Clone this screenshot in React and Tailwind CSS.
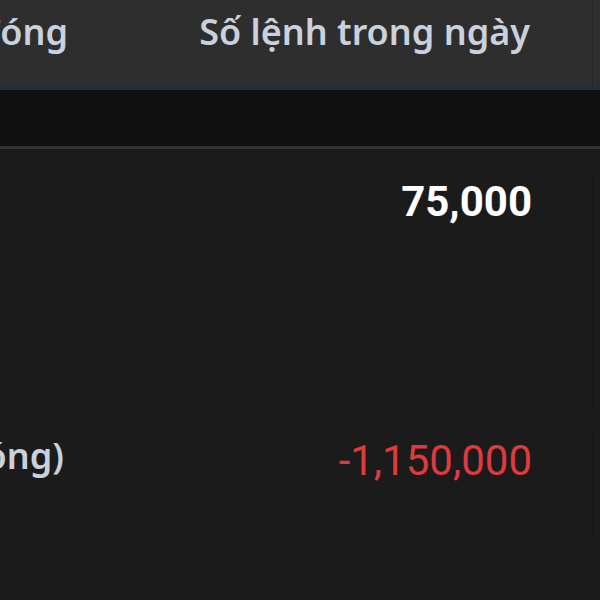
import React from 'react';

const rows = [
  { label: '', value: '75,000', tone: 'text-white font-bold', pad: 'h-[130px] pt-[21px]' },
  { label: '', value: '', tone: '', pad: 'h-[130px]' },
  { label: 'Lãi/lỗ (đã đóng)', value: '-1,150,000', tone: 'text-[#df3a3f]', pad: 'h-[130px] pt-[20px]' },
];

const App = () => {
  return (
    <div className="w-[600px] h-[600px] overflow-hidden bg-[#1b1b1b] font-['Roboto',sans-serif]">
      {/* header */}
      <div className="flex h-[86px] bg-[#2e2e2e] text-[#c9d1dc] text-[36px] font-semibold font-['Noto_Sans',sans-serif]">
        <div className="w-[68px] flex justify-end overflow-hidden whitespace-nowrap pt-[5px]">
          <span>Lệnh đóng</span>
        </div>
        <div className="w-[524px] flex justify-end pr-[62px] pt-[5px] whitespace-nowrap">
          Số lệnh trong ngày
        </div>
        <div className="flex-1 border-l border-[#262626]"></div>
      </div>
      <div className="h-[4px] bg-[#262c3b]"></div>
      <div className="h-[56px] bg-[#101010]"></div>
      <div className="h-[3px] bg-[#323232]"></div>

      {rows.map((r, i) => (
        <div key={i} className={`flex ${r.pad} text-[42px]`}>
          <div className="w-[64px] flex justify-end overflow-hidden whitespace-nowrap text-[#c9d1dc] text-[36px] font-semibold font-['Noto_Sans',sans-serif]">
            <span>{r.label}</span>
          </div>
          <div className={`w-[528px] flex justify-end pr-[60px] whitespace-nowrap ${r.tone}`}>
            {r.value}
          </div>
          <div className="flex-1 border-l border-[#171717]"></div>
        </div>
      ))}
    </div>
  );
};

export default App;
